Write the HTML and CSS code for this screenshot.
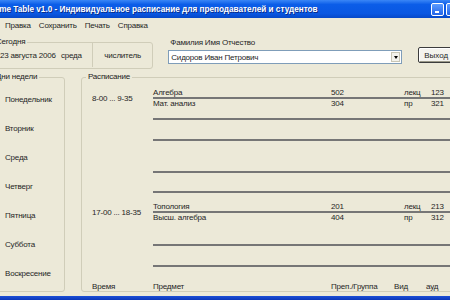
FILE: index.html
```html
<!DOCTYPE html>
<html lang="ru">
<head>
  <meta charset="UTF-8" />
  <title>Time Table v1.0</title>
  <link rel="stylesheet" href="styles.css">
</head>
<body>
<div class="window">
  <div class="titlebar">
    <span class="title">Time Table v1.0 - Индивидуальное расписание для преподавателей и студентов</span>
    <div class="caption-btns">
      <span class="cbtn min"><span class="glyph"></span></span>
      <span class="cbtn max"></span>
      <span class="cbtn close"></span>
    </div>
  </div>

  <div class="menubar">
    <span>Правка</span>
    <span>Сохранить</span>
    <span>Печать</span>
    <span>Справка</span>
  </div>

  <div class="toolbar">
    <fieldset class="group today">
      <legend>Сегодня</legend>
      <div class="today-body">
        <div class="today-date"><span class="date">23 августа 2006</span><span>среда</span></div>
        <div class="today-week">числитель</div>
      </div>
    </fieldset>
    <div class="fio">
      <label>Фамилия Имя Отчество</label>
      <div class="combo">
        <span class="combo-text">Сидоров Иван Петрович</span>
        <span class="combo-btn"><span class="arrow"></span></span>
      </div>
    </div>
    <button class="exit">Выход</button>
  </div>

  <div class="main">
    <fieldset class="group days">
      <legend>Дни недели</legend>
      <ul class="day-list">
        <li>Понедельник</li>
        <li>Вторник</li>
        <li>Среда</li>
        <li>Четверг</li>
        <li>Пятница</li>
        <li>Суббота</li>
        <li>Воскресение</li>
      </ul>
    </fieldset>

    <fieldset class="group schedule">
      <legend>Расписание</legend>
      <div class="sched-body">
        <div class="slot">
          <span class="time">8-00 ... 9-35</span>
          <span class="c-subj">Алгебра</span><span class="c-room">502</span><span class="c-kind">лекц</span><span class="c-aud">123</span>
          <span class="rule"></span>
          <span class="c-subj low">Мат. анализ</span><span class="c-room low">304</span><span class="c-kind low">пр</span><span class="c-aud low">321</span>
        </div>
        <div class="slot"><span class="rule"></span></div>
        <div class="slot"><span class="rule"></span></div>
        <div class="slot gap-l"><span class="rule"></span></div>
        <div class="slot flush"><span class="rule"></span></div>
        <div class="slot flush">
          <span class="time">17-00 ... 18-35</span>
          <span class="c-subj">Топология</span><span class="c-room">201</span><span class="c-kind">лекц</span><span class="c-aud">213</span>
          <span class="rule"></span>
          <span class="c-subj low">Высш. алгебра</span><span class="c-room low">404</span><span class="c-kind low">пр</span><span class="c-aud low">312</span>
        </div>
        <div class="slot gap-xl"><span class="rule"></span></div>
        <div class="slot"><span class="rule"></span></div>

        <div class="sched-foot">
          <span>Время</span>
          <span>Предмет</span>
          <span>Преп./Группа</span>
          <span>Вид</span>
          <span>ауд</span>
        </div>
      </div>
    </fieldset>
  </div>

  <div class="frame-bottom"></div>
</div>
</body>
</html>
```

FILE: styles.css
```css
body {
  margin: 0;
  width: 450px;
  height: 300px;
  overflow: hidden;
  background: #ece9d8;
  font-family: "Liberation Sans", Arial, sans-serif;
  font-size: 8px;
  color: #262626;
  letter-spacing: -0.2px;
}
.window {
  width: 490px;
  margin-left: -12px;
}

/* заголовок окна */
.titlebar {
  height: 18px;
  display: flex;
  align-items: center;
  background: linear-gradient(#3a86f6, #0b5de8 25%, #0957e2 75%, #0648c8);
  color: #fff;
}
.title {
  flex: 1;
  padding-left: 4px;
  font-weight: bold;
  font-size: 8.2px;
  letter-spacing: 0;
  white-space: nowrap;
  text-shadow: 1px 1px #0a2d8a;
}
.caption-btns {
  display: flex;
  gap: 2px;
  padding-right: 4px;
}
.cbtn {
  width: 13px;
  height: 13px;
  box-sizing: border-box;
  border: 1px solid #fff;
  border-radius: 2px;
  background: linear-gradient(#5c9cff, #2264e8);
}
.cbtn.min {
  display: flex;
  align-items: flex-end;
  padding: 0 0 2px 3px;
}
.cbtn .glyph {
  width: 4px;
  height: 2px;
  background: #fff;
}

/* меню */
.menubar {
  height: 14px;
  display: flex;
  align-items: center;
  gap: 8px;
  padding-left: 17px;
}

/* группы */
.group {
  margin: 0;
  padding: 0;
  min-width: 0;
  box-sizing: border-box;
  border: 1px solid #d0cdb9;
  border-radius: 3px;
}
.group legend {
  padding: 0 2px;
  margin-left: 4px;
  line-height: 10px;
  color: #222;
}

.toolbar {
  height: 40px;
  display: flex;
  align-items: flex-start;
}
.today {
  margin: 5px 0 0 1px;
  width: 165px;
  height: 32px;
}
.today-body {
  display: flex;
  height: 24px;
  margin-top: -4px;
}
.today-date {
  width: 92px;
  padding-left: 10px;
  display: flex;
  align-items: center;
  border-right: 1px solid #d0cdb9;
}
.today-date .date { width: 61px; }
.today-week {
  flex: 1;
  display: flex;
  align-items: center;
  justify-content: center;
}

.fio {
  margin: 6px 0 0 15px;
  width: 235px;
}
.fio label {
  display: block;
  line-height: 10px;
  padding-left: 2px;
  margin-bottom: 2px;
}
.combo {
  height: 14px;
  box-sizing: border-box;
  border: 1px solid #7f9db9;
  background: #fff;
  display: flex;
  align-items: center;
}
.combo-text {
  flex: 1;
  padding-left: 2px;
}
.combo-btn {
  width: 9px;
  height: 10px;
  margin-right: 1px;
  box-sizing: border-box;
  border: 1px solid #c9c6b4;
  background: #f3f2ec;
  display: flex;
  align-items: center;
  justify-content: center;
}
.arrow {
  border-top: 3px solid #000;
  border-left: 2px solid transparent;
  border-right: 2px solid transparent;
}

.exit {
  margin: 15px 0 0 16px;
  width: 60px;
  height: 16px;
  padding: 0 0 0 5px;
  text-align: left;
  font: inherit;
  color: inherit;
  background: #f4f3ee;
  border: 1px solid #3c3c3c;
  border-radius: 2px;
  box-shadow: inset 1px 1px #fff, inset -1px -1px #9a9888;
}

/* основная часть */
.main {
  height: 220px;
  display: flex;
  gap: 16px;
  padding-left: 1px;
}
.days {
  width: 76px;
}
.day-list {
  list-style: none;
  margin: 0;
  padding: 3px 0 0 15px;
}
.day-list li {
  height: 29px;
  line-height: 29px;
}

.schedule {
  flex: 1;
}
.sched-body {
  height: 100%;
  display: flex;
  flex-direction: column;
  padding: 6px 0 0 10px;
  box-sizing: border-box;
}
.slot {
  display: grid;
  grid-template-columns: 61px 178px 73px 27px 1fr;
  grid-template-rows: 9px 2px 9px;
  margin-top: 1px;
  line-height: 9px;
}
.slot:first-child { margin-top: 0; }
.slot.flush { margin-top: 0; }
.slot.gap-l { margin-top: 12px; }
.slot.gap-xl { margin-top: 13px; }
.slot .time {
  grid-column: 1;
  grid-row: 1 / 4;
  align-self: center;
}
.slot .rule {
  grid-column: 2 / -1;
  grid-row: 2;
  background: #767676;
}
.slot .c-subj { grid-column: 2; grid-row: 1; }
.slot .c-room { grid-column: 3; grid-row: 1; }
.slot .c-kind { grid-column: 4; grid-row: 1; }
.slot .c-aud { grid-column: 5; grid-row: 1; }
.slot .low { grid-row: 3; }

.sched-foot {
  margin-top: auto;
  display: grid;
  grid-template-columns: 61px 178px 63px 32px 1fr;
  line-height: 9px;
}

.frame-bottom {
  margin-top: 4px;
  height: 4px;
  background: linear-gradient(#1c4fd6, #0a36b8);
}
```
